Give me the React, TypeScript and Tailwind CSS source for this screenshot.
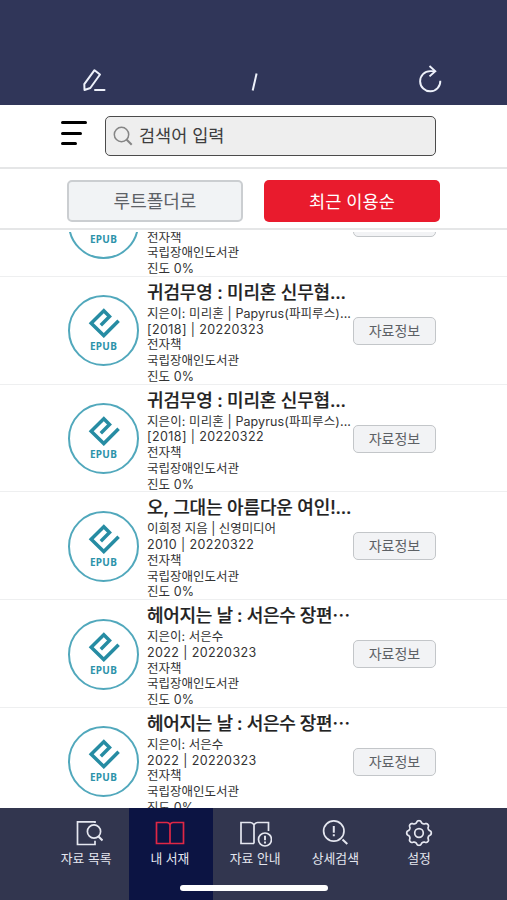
import React from "react";

type Book = { title: string; author: string; date: string; titleClass: string; authorClass: string };

const books: Book[] = [
  { title: "", author: "", date: "", titleClass: "", authorClass: "" },
  { title: "귀검무영 : 미리혼 신무협...", author: "지은이: 미리혼 | Papyrus(파피루스)...", date: "[2018] | 20220323", titleClass: "tracking-[-0.18px]", authorClass: "tracking-[0.1px]" },
  { title: "귀검무영 : 미리혼 신무협...", author: "지은이: 미리혼 | Papyrus(파피루스)...", date: "[2018] | 20220322", titleClass: "tracking-[-0.18px]", authorClass: "tracking-[0.1px]" },
  { title: "오, 그대는 아름다운 여인!...", author: "이희정 지음 | 신영미디어", date: "2010 | 20220322", titleClass: "tracking-[-0.15px]", authorClass: "tracking-[-0.05px]" },
  { title: "헤어지는 날 : 서은수 장편⋯", author: "지은이: 서은수", date: "2022 | 20220323", titleClass: "tracking-[-0.33px]", authorClass: "tracking-[0.02px]" },
  { title: "헤어지는 날 : 서은수 장편⋯", author: "지은이: 서은수", date: "2022 | 20220323", titleClass: "tracking-[-0.33px]", authorClass: "tracking-[0.02px]" },
];

function EpubBadge() {
  return (
    <div className="flex h-[71px] w-[71px] shrink-0 flex-col items-center rounded-full border-2 border-[#51a8bc] pt-[9px]">
      <svg className="shrink-0" width="32" height="32" viewBox="0 0 32 32" fill="none" stroke="#268ca3" strokeWidth="3.5">
        <path d="M12.8 19.2 L21.5 10.6 L15.8 4.8 L3.2 17.2 L15.8 29.6 L30.6 14.8" />
      </svg>
      <span className="mt-[2px] font-['Noto_Sans','Open_Sans',sans-serif] text-[10px] leading-[12px] font-bold tracking-[0.3px] text-[#2d93aa]">EPUB</span>
    </div>
  );
}

function BookRow({ book }: { book: Book }) {
  return (
    <li className="flex h-[107.75px] shrink-0 items-center border-b border-[#eeeff0] pt-[1.5px] pr-[71px] pl-[68px]">
      <EpubBadge />
      <div className="ml-2 w-[206px] self-start whitespace-nowrap text-[#333]">
        <h2 className={`mt-[2.5px] mb-[1px] h-[24px] text-[18px] leading-[24px] font-medium text-[#222] [-webkit-text-stroke:0.2px_#222] ${book.titleClass}`}>{book.title}</h2>
        <div className="text-[12.5px] leading-[15.8px]">
          <p className={`h-[15.8px] ${book.authorClass}`}>{book.author}</p>
          <p className="h-[15.8px] tracking-[0.4px]">{book.date}</p>
          <p>전자책</p>
          <p>국립장애인도서관</p>
          <p className="tracking-[0.1px]">진도 0%</p>
        </div>
      </div>
      <button className="h-[28px] w-[83px] shrink-0 rounded-[5px] border-[1.5px] border-[#c3c6c9] bg-[#f2f3f5] text-[14px] leading-[24px] text-[#5d6165]">자료정보</button>
    </li>
  );
}

const stroke = { fill: "none", stroke: "currentColor", strokeWidth: 1.7 } as const;

function ListIcon() {
  return (
    <svg className="ml-[4px]" width="30" height="28" viewBox="0 0 30 28" {...stroke}>
      <path d="M22 4V2.8H4.5v22.700H22v-3.700" />
      <circle cx="21" cy="12.5" r="6.6" />
      <path d="m25.500 17.500 4 4" strokeWidth="2.2" />
    </svg>
  );
}

function BookIcon() {
  return (
    <svg width="30" height="28" viewBox="0 0 30 28" {...stroke}>
      <path d="M15 5.800c-.5-1.500-1.500-2.300-3-2.300H1.500v21H15V5.800c.5-1.500 1.500-2.300 3-2.300h10.500v21H15" />
    </svg>
  );
}

function GuideIcon() {
  return (
    <svg width="34" height="28" viewBox="0 0 34 28" {...stroke}>
      <path d="M16 24.500H3V3.500h9.500c1.500 0 2.500.8 3.500 2.300v18.700M16 5.800c1-1.500 2-2.300 3.500-2.300h11v8.500" />
      <circle cx="27" cy="20.5" r="6.5" />
      <path d="M27 16.800v4.500M27 22.500v2" strokeWidth="1.9" />
    </svg>
  );
}

function DetailIcon() {
  return (
    <svg width="30" height="28" viewBox="0 0 30 28" {...stroke}>
      <circle cx="13.8" cy="12" r="10.2" />
      <path d="M13.800 7v6.700M13.800 15.200v2M22.500 20.500l4.800 4.500" strokeWidth="2" />
    </svg>
  );
}

const gearOutline = Array.from({ length: 161 }, (_, i) => {
  const angle = (i / 160) * Math.PI * 2;
  const radius = 11.2 + 1.2 * Math.tanh(1.5 * Math.cos(8 * angle));
  return `${(15 + radius * Math.cos(angle)).toFixed(2)},${(14 + radius * Math.sin(angle)).toFixed(2)}`;
}).join(" ");

function GearIcon() {
  return (
    <svg width="30" height="28" viewBox="0 0 30 28" {...stroke} strokeLinejoin="round">
      <polygon points={gearOutline} />
      <circle cx="15" cy="14" r="4.3" />
    </svg>
  );
}

const tabs = [
  { label: "자료 목록", icon: <ListIcon />, active: false, inset: "pr-[3px]" },
  { label: "내 서재", icon: <BookIcon />, active: true, inset: "pr-[2px]" },
  { label: "자료 안내", icon: <GuideIcon />, active: false, inset: "pl-[2px]" },
  { label: "상세검색", icon: <DetailIcon />, active: false, inset: "pr-[4px]" },
  { label: "설정", icon: <GearIcon />, active: false, inset: "pr-[3px]" },
];

export default function App() {
  return (
    <div className="relative flex h-[900px] w-[507px] flex-col overflow-hidden bg-white font-['Inter','Noto_Sans_CJK_KR',sans-serif]">
      <header className="flex h-[105px] shrink-0 items-end bg-[#303659] pb-[11px] pl-[81px] text-[#edf1fa]">
        <svg width="25" height="28" viewBox="0 0 25 28" fill="none" stroke="currentColor" strokeWidth="2" strokeLinejoin="round" strokeLinecap="round">
          <path d="M13.500 4.200 19 8.500 9.300 22 3.500 24 3.300 18.200z" />
          <path d="M14 24h9.500" />
        </svg>
        <svg className="ml-[142px]" width="12" height="28" viewBox="0 0 12 28" fill="none" stroke="currentColor" strokeWidth="2">
          <path d="M8.600 7.500 4.700 24.500" />
        </svg>
        <svg className="ml-[157px]" width="26" height="30" viewBox="0 0 26 30" fill="none" stroke="currentColor" strokeWidth="1.9">
          <path d="M23.300 16.700A10.100 10.100 0 1 1 13.200 7.100h4.800" />
          <path d="m12.500 2 5.800 5.200-5.800 5.200" />
        </svg>
      </header>

      <section className="flex h-[64px] shrink-0 items-start border-b-2 border-[#e5e6e7] pt-[11px] pl-[61px]">
        <div className="mt-[5px] flex w-[44px] flex-col gap-[7.5px]">
          <i className="h-[3px] w-[26px] rounded-full bg-black" />
          <i className="h-[3px] w-[21px] rounded-full bg-black" />
          <i className="h-[3px] w-[16px] rounded-full bg-black" />
        </div>
        <div className="flex h-[40px] w-[331px] items-center rounded-[5px] border-[1.5px] border-[#4b4b4b] bg-[#eee] pl-[7px]">
          <svg width="20" height="20" viewBox="0 0 20 20" fill="none" stroke="#858585" strokeWidth="1.5">
            <circle cx="8.5" cy="8.5" r="7.2" />
            <path d="m13.500 13.500 5.200 5.200" strokeWidth="2" />
          </svg>
          <span className="ml-[6px] text-[17.5px] leading-6 text-[#3d3d3d]">검색어 입력</span>
        </div>
      </section>

      <section className="flex h-[61px] shrink-0 gap-[21px] border-b-2 border-[#e5e6e7] pt-[11px] pl-[67px]">
        <button className="h-[42px] w-[176px] rounded-[5px] border-2 border-[#cbced1] bg-[#f1f3f5] pt-[1px] text-[18px] text-[#5d6267]">루트폴더로</button>
        <button className="h-[42px] w-[176px] rounded-[5px] bg-[#e91b2d] pt-[2px] text-[17.6px] text-white">최근 이용순</button>
      </section>

      <main className="min-h-0 flex-1 overflow-hidden pt-[1.5px]">
        <div className="h-full overflow-hidden">
          <ul className="-mt-[62.5px] flex flex-col">
            {books.map((book, index) => <BookRow key={index} book={book} />)}
          </ul>
        </div>
      </main>

      <nav className="flex h-[92px] shrink-0 bg-[#32364f] pl-[46px]">
        {tabs.map(({ label, icon, active, inset }) => (
          <div key={label} className={`flex w-[83.25px] flex-col items-center pt-[11px] ${inset} ${active ? "bg-[#0c1443] text-[#df2745]" : "text-[#e5e7f0]"}`}>
            {icon}
            <span className="mt-[3px] text-[12.8px] leading-[18px] whitespace-nowrap text-[#e5e7f0]">{label}</span>
          </div>
        ))}
      </nav>
      <div className="absolute bottom-[9px] left-[180px] h-[6px] w-[148px] rounded-full bg-white" />
    </div>
  );
}
